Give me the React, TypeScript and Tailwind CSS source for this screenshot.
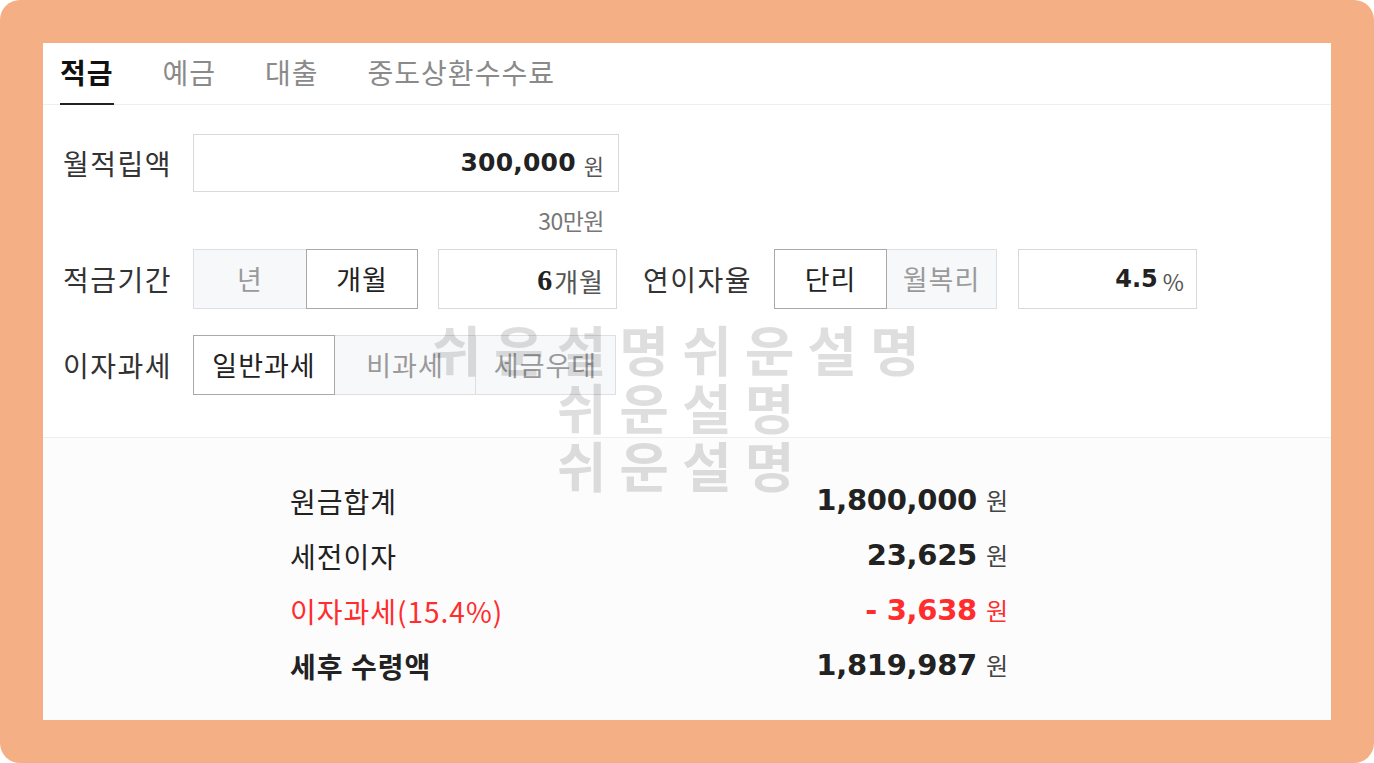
const KR = "font-['Noto_Sans_CJK_KR','Noto_Sans',sans-serif]";
const NUM = "font-['DejaVu_Sans','Noto_Sans_CJK_KR',sans-serif]";

function Seg({ items, active, widths }: { items: string[]; active: number; widths: string[] }) {
  return (
    <div className="flex">
      {items.map((t, i) => (
        <div
          key={t}
          className={`h-[60px] flex items-center justify-center text-[27px] tracking-[1px] border ${widths[i]} ${i > 0 ? '-ml-px' : ''} ${
            i === active
              ? 'bg-white border-[#a9a9a9] text-[#222] z-10'
              : 'bg-[#f7f8fa] border-[#dedfe2] text-[#9a9a9a]'
          }`}
        >
          {t}
        </div>
      ))}
    </div>
  );
}

function ResultRow({ label, value, red, strong }: { label: string; value: string; red?: boolean; strong?: boolean }) {
  return (
    <div className={`h-[55px] flex items-center justify-between ${red ? 'text-[#ff2d2d]' : 'text-[#222]'}`}>
      <span className={`text-[28px] tracking-[1px] ${strong ? 'font-bold' : ''}`}>{label}</span>
      <span className="flex items-baseline gap-[9px]">
        <span className={`${NUM} font-bold text-[29px] tracking-[-0.3px]`}>{value}</span>
        <span className={`text-[24px] ${red ? '' : 'text-[#444]'}`}>원</span>
      </span>
    </div>
  );
}

export default function App() {
  return (
    <div className={`w-[1374px] h-[763px] bg-white ${KR}`}>
      <div className="relative w-full h-full bg-[#f4b084] rounded-[20px] p-[43px]">
        <div className="w-full h-full bg-white flex flex-col">
          {/* tabs */}
          <div className="h-[62px] border-b border-[#efefef] flex items-stretch pl-[17px] gap-[49px] text-[28px] tracking-[1px]">
            <div className="relative flex items-center font-bold text-[#111] pb-[4px]">
              적금
              <span className="absolute left-0 right-0 bottom-[-1px] h-[2px] bg-[#222]" />
            </div>
            <div className="flex items-center text-[#8a8a8a] pb-[4px]">예금</div>
            <div className="flex items-center text-[#8a8a8a] pb-[4px]">대출</div>
            <div className="flex items-center text-[#8a8a8a] pb-[4px]">중도상환수수료</div>
          </div>

          {/* form */}
          <div className="pt-[29px] pl-[20px] pb-[42px] border-b border-[#eeeeee] text-[#333]">
            <div className="flex items-center">
              <div className="w-[130px] text-[28px] tracking-[1.5px]">월적립액</div>
              <div className="w-[426px] h-[58px] border border-[#d9d9d9] flex items-center justify-end pr-[14px] gap-[8px]">
                <span className={`${NUM} font-bold text-[25px] text-[#222] tracking-[0.2px]`}>300,000</span>
                <span className="text-[22px] text-[#555] mt-[4px]">원</span>
              </div>
            </div>
            <div className="w-[541px] flex justify-end pt-[9px] pb-[10px]">
              <span className="text-[23px] text-[#777] tracking-[-0.5px] leading-[38px]">30만원</span>
            </div>

            <div className="flex items-center">
              <div className="w-[130px] text-[28px] tracking-[1.5px]">적금기간</div>
              <Seg items={['년', '개월']} active={1} widths={['w-[114px]', 'w-[112px]']} />
              <div className="ml-[20px] w-[179px] h-[60px] border border-[#d9d9d9] flex items-center justify-end pr-[12px] gap-[2px]">
                <span className="font-['Liberation_Serif',serif] font-bold text-[30px] text-[#222]">6</span>
                <span className="text-[26px] tracking-[1px] text-[#555] mt-[3px]">개월</span>
              </div>
              <div className="ml-[26px] w-[131px] text-[28px] tracking-[1.5px]">연이자율</div>
              <Seg items={['단리', '월복리']} active={0} widths={['w-[113px]', 'w-[111px]']} />
              <div className="ml-[21px] w-[179px] h-[60px] border border-[#d9d9d9] flex items-center justify-end pr-[12px] gap-[5px]">
                <span className={`${NUM} font-bold text-[24px] text-[#222]`}>4.5</span>
                <span className="text-[23px] text-[#555] mt-[4px]">%</span>
              </div>
            </div>

            <div className="flex items-center mt-[26px]">
              <div className="w-[130px] text-[28px] tracking-[1.5px]">이자과세</div>
              <Seg items={['일반과세', '비과세', '세금우대']} active={0} widths={['w-[142px]', 'w-[142px]', 'w-[141px]']} />
            </div>
          </div>

          {/* results */}
          <div className="flex-1 bg-[#fcfcfc] pt-[35px]">
            <div className="ml-[247px] w-[718px]">
              <ResultRow label="원금합계" value="1,800,000" />
              <ResultRow label="세전이자" value="23,625" />
              <ResultRow label="이자과세(15.4%)" value="- 3,638" red />
              <ResultRow label="세후 수령액" value="1,819,987" strong />
            </div>
          </div>
        </div>

        {/* watermark */}
        <div className="absolute left-[376px] top-[320px] w-[612px] text-center font-bold text-[54px] leading-[58px] tracking-[13px] text-black/[0.13] pointer-events-none select-none">
          <div>쉬운설명쉬운설명</div>
          <div>쉬운설명</div>
          <div>쉬운설명</div>
        </div>
      </div>
    </div>
  );
}
